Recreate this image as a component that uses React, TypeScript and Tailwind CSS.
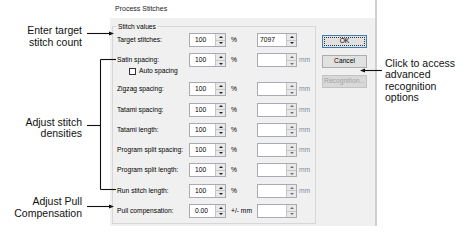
import React from "react";

function Tri({ up, dim }: { up?: boolean; dim?: boolean }) {
  if (up) {
    return (
      <div
        className={
          dim
            ? "w-0 h-0 border-l-[2px] border-r-[2px] border-b-[2px] border-l-transparent border-r-transparent border-b-[#707070]"
            : "w-0 h-0 border-l-[2px] border-r-[2px] border-b-[2px] border-l-transparent border-r-transparent border-b-[#202020]"
        }
      />
    );
  }
  return (
    <div
      className={
        dim
          ? "w-0 h-0 border-l-[2px] border-r-[2px] border-t-[2px] border-l-transparent border-r-transparent border-t-[#707070]"
          : "w-0 h-0 border-l-[2px] border-r-[2px] border-t-[2px] border-l-transparent border-r-transparent border-t-[#202020]"
      }
    />
  );
}

function Spin({ dim }: { dim?: boolean }) {
  return (
    <div className="w-[10px] h-full flex flex-col bg-[#e8e8e8] border-l border-[#c6c6c6]">
      <div className="flex-1 flex items-center justify-center border-b border-[#c6c6c6]">
        <Tri up dim={dim} />
      </div>
      <div className="flex-1 flex items-center justify-center">
        <Tri dim={dim} />
      </div>
    </div>
  );
}

function Field1({ value }: { value: string }) {
  return (
    <div className="w-[37px] h-[14px] flex border border-[#a9abb2] bg-white shrink-0">
      <div className="flex-1 flex items-center pl-[5px]">{value}</div>
      <Spin />
    </div>
  );
}

function Field2({ value, dim }: { value?: string; dim?: boolean }) {
  return (
    <div className="w-[40px] h-[14px] flex border border-[#a9abb2] bg-white shrink-0">
      <div className="flex-1 flex items-center pl-[2px]">{value}</div>
      <Spin dim={dim} />
    </div>
  );
}

function Row({
  label,
  v1,
  unit1,
  v2,
  unit2,
  dim,
  first,
}: {
  label: string;
  v1: string;
  unit1: string;
  v2?: string;
  unit2?: string;
  dim?: boolean;
  first?: boolean;
}) {
  return (
    <div className={first ? "flex items-center h-[14px]" : "flex items-center h-[14px] mt-[6.3px]"}>
      <div className="w-[72px] shrink-0 whitespace-nowrap">{label}</div>
      <Field1 value={v1} />
      <div className="w-[31px] shrink-0 pl-[5px] whitespace-nowrap">{unit1}</div>
      <Field2 value={v2} dim={dim} />
      {unit2 ? <div className="pl-[2px] text-[#8a8a9c] whitespace-nowrap">{unit2}</div> : null}
    </div>
  );
}

export default function App() {
  return (
    <div className="relative w-[473px] h-[241px] bg-white overflow-hidden font-['Liberation_Sans',Arial,sans-serif] text-black">
      <div className="flex items-start">
        {/* left callouts */}
        <div className="w-[110px] shrink-0 pt-[25px] pr-[28px] flex flex-col items-end text-right text-[10.5px] leading-[11.5px] text-[#111]">
          <div>
            Enter target
            <br />
            stitch count
          </div>
          <div className="mt-[68.5px]">
            Adjust stitch
            <br />
            densities
          </div>
          <div className="mt-[56.5px]">
            Adjust Pull
            <br />
            Compensation
          </div>
        </div>

        {/* dialog */}
        <div className="w-[267px] h-[226px] shrink-0 flex border-r-2 border-[#cfcfcf]">
          <div className="flex-1 flex flex-col">
            <div className="h-[18px] pl-[5px] flex items-center text-[7px] text-[#1a1a1a]">Process Stitches</div>
            <div className="flex-1 bg-[#f0f0f0] flex pl-[2px] pt-[8px] text-[6.7px]">
              <div className="relative w-[204px] h-[198px] border border-[#d7d7d7] pt-[6px] pl-[4px]">
                <div className="absolute left-[3px] top-[-5px] px-[2px] bg-[#f0f0f0] leading-[9px]">Stitch values</div>
                <Row first label="Target stitches:" v1="100" unit1="%" v2="7097" />
                <Row label="Satin spacing:" v1="100" unit1="%" unit2="mm" dim />
                <div className="flex items-center h-[8px] pl-[12px]">
                  <div className="w-[7px] h-[7px] border border-[#333] bg-white" />
                  <div className="pl-[3px]">Auto spacing</div>
                </div>
                <div className="mt-[7px]" />
                <Row first label="Zigzag spacing:" v1="100" unit1="%" unit2="mm" dim />
                <Row label="Tatami spacing:" v1="100" unit1="%" unit2="mm" dim />
                <Row label="Tatami length:" v1="100" unit1="%" unit2="mm" dim />
                <Row label="Program split spacing:" v1="100" unit1="%" unit2="mm" dim />
                <Row label="Program split length:" v1="100" unit1="%" unit2="mm" dim />
                <Row label="Run stitch length:" v1="100" unit1="%" unit2="mm" dim />
                <Row label="Pull compensation:" v1="0.00" unit1="+/- mm" dim />
              </div>
              <div className="ml-[6px] pt-[9px] flex flex-col gap-[7px] w-[45px]">
                <div className="h-[13px] border border-[#3c7fb1] bg-[#e1e1e1] p-[1px]">
                  <div className="h-full border border-dotted border-[#333] flex items-center justify-center leading-none">OK</div>
                </div>
                <div className="h-[13px] border border-[#adadad] bg-[#e1e1e1] flex items-center justify-center leading-none">
                  Cancel
                </div>
                <div className="h-[13px] border border-[#c3c3c3] bg-[#d8d8d8] flex items-center justify-center leading-none text-[#a3a3a3] overflow-hidden whitespace-nowrap">
                  Recognition...
                </div>
              </div>
            </div>
          </div>
        </div>

        {/* right callout */}
        <div className="pl-[8px] pt-[57.5px] text-[10.5px] leading-[11.5px] text-[#111]">
          Click to access
          <br />
          advanced
          <br />
          recognition
          <br />
          options
        </div>
      </div>

      <svg className="absolute inset-0 pointer-events-none" width="473" height="241">
        <g stroke="#111" strokeWidth="1.1" fill="none">
          <path d="M87 33.5 H110" />
          <path d="M87 125.5 H100.5" />
          <path d="M100.5 59.5 V189.5" />
          <path d="M100.5 59.5 H116" />
          <path d="M100.5 189.5 H116" />
          <path d="M87 206.5 H110" />
          <path d="M382 70.5 H364" />
        </g>
        <g fill="#111">
          <polygon points="114,33.5 109,31.6 109,35.4" />
          <polygon points="114,206.5 109,204.6 109,208.4" />
          <polygon points="360,70.5 365,68.6 365,72.4" />
        </g>
      </svg>
    </div>
  );
}
